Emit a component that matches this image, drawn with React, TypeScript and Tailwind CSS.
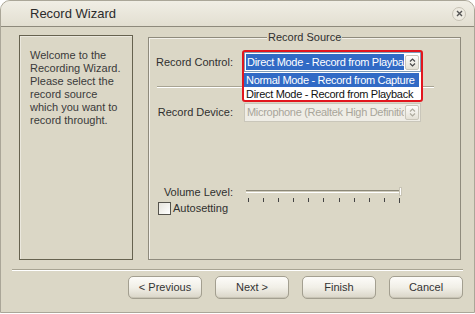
import React from 'react';

const Spin = ({ disabled }: { disabled?: boolean }) => (
  <div className="w-[14px] h-[15px] shrink-0 rounded-[2px] border border-[#c9c6ba] bg-linear-to-b from-[#fdfdfb] to-[#e4e1d6] flex items-center justify-center">
    <svg width="7" height="9" viewBox="0 0 7 9">
      <path
        d="M1 3.5L3.5 1L6 3.5M1 5.5L3.5 8L6 5.5"
        fill="none"
        stroke={disabled ? '#aeab9f' : '#4a4a4a'}
        strokeWidth="1.2"
      />
    </svg>
  </div>
);

const Btn = ({ label }: { label: string }) => (
  <button className="w-[74px] h-[23px] rounded-[5px] border border-[#a39f90] bg-linear-to-b from-[#fdfcf9] via-[#f1efe7] to-[#d9d5c7] text-[11px] text-[#333] shadow-[inset_0_-1px_0_#c8c4b5]">
    {label}
  </button>
);

const ticks = [0, 1, 2, 3, 4, 5, 6, 7, 8, 9, 10];

export default function App() {
  return (
    <div className="w-[475px] h-[314px] bg-white font-['Liberation_Sans',Arial,sans-serif] text-[11px] text-[#2f2f2f]">
      <div className="w-[475px] h-[313px] rounded-t-[10px] border border-[#aaa698] bg-[#dbd7c6] flex flex-col overflow-hidden">
        {/* Title bar */}
        <div className="h-[26px] shrink-0 flex items-center justify-between pl-[29px] pr-[8px] bg-linear-to-b from-[#f0eee5] to-[#e3dfd1] border-b border-[#8e8a7c]">
          <span className="text-[13px] text-[#2b2b2b]">Record Wizard</span>
          <div className="w-[14px] h-[14px] rounded-full border border-[#c6c2b4] bg-[#eeebe1] flex items-center justify-center">
            <svg width="7" height="7" viewBox="0 0 7 7">
              <path d="M1 1L6 6M6 1L1 6" stroke="#555" strokeWidth="1.4" />
            </svg>
          </div>
        </div>

        {/* Body */}
        <div className="flex pl-[18px] pt-[8px] h-[232px] shrink-0">
          <div className="w-[114px] h-[225px] border border-[#66624f] shadow-[inset_1px_1px_0_#ebe8de] pl-[10px] pt-[13px] leading-[13px] text-[#3a3a3a]">
            Welcome to the
            <br />
            Recording Wizard.
            <br />
            Please select the
            <br />
            record source
            <br />
            which you want to
            <br />
            record throught.
          </div>

          <div className="relative ml-[15px] mt-[2px] w-[313px] h-[223px] border border-[#8f8b7d] shadow-[inset_1px_1px_0_#f3f1ea]">
            <span className="absolute left-[118px] -top-[7px] px-[1px] bg-[#dbd7c6] leading-[13px]">Record Source</span>

            {/* Record Control */}
            <div className="flex items-center mt-[14px]">
              <div className="w-[84px] text-right">Record Control:</div>
              <div className="relative ml-[11px] w-[177px] h-[20px] tracking-[-0.3px]">
                <div className="h-full border border-[#7f9db9] bg-white flex items-center p-[1px] gap-[1px]">
                  <div className="flex-1 h-[16px] bg-[#316ac5] text-white leading-[16px] px-[1px] overflow-hidden whitespace-nowrap">
                    Direct Mode - Record from Playback
                  </div>
                  <Spin />
                </div>
                <div className="absolute left-0 top-[20px] w-full h-[30px] bg-white pt-[1px] pr-[2px] z-10">
                  <div className="h-[14px] leading-[14px] bg-[#316ac5] text-white px-[2px] whitespace-nowrap overflow-hidden">
                    Normal Mode - Record from Capture
                  </div>
                  <div className="h-[14px] leading-[14px] text-[#111] px-[2px] whitespace-nowrap overflow-hidden">
                    Direct Mode - Record from Playback
                  </div>
                </div>
                <div className="absolute -left-[2px] -top-[2px] w-[181px] h-[52px] border-2 border-[#e2161e] rounded-[3px] z-20" />
              </div>
            </div>

            {/* Separator */}
            <div className="ml-[8px] mt-[14px] w-[277px] h-[2px] border-t border-[#a8a493] border-b border-b-white" />

            {/* Record Device */}
            <div className="flex items-center mt-[15px]">
              <div className="w-[84px] text-right">Record Device:</div>
              <div className="ml-[11px] w-[177px] h-[19px] border border-[#c9c6ba] bg-[#efede6] flex items-center pl-[2px] pr-[1px] gap-[1px] tracking-[-0.3px]">
                <div className="flex-1 text-[#a8a59a] overflow-hidden whitespace-nowrap leading-[15px]">
                  Microphone (Realtek High Definition Audio)
                </div>
                <Spin disabled />
              </div>
            </div>

            {/* Volume */}
            <div className="flex items-start mt-[63px]">
              <div className="w-[84px] text-right leading-[14px]">Volume Level:</div>
              <div className="ml-[13px] w-[156px] pt-[5px]">
                <div className="relative h-[3px] border-t border-[#8c8878] bg-[#cfcbbb] border-b border-b-white">
                  <div className="absolute right-[0px] -top-[4px] w-[3px] h-[9px] bg-white border border-[#c9c5b6]" />
                </div>
                <div className="flex justify-between mt-[5px] px-[2px]">
                  {ticks.map((t) => (
                    <div key={t} className={t === 10 ? 'w-[1px] h-[5px] bg-[#444]' : 'w-[1px] h-[4px] bg-[#444]'} />
                  ))}
                </div>
              </div>
            </div>

            {/* Autosetting */}
            <div className="flex items-center ml-[9px] -mt-[1px]">
              <div className="w-[13px] h-[13px] border border-[#55534c] bg-linear-to-br from-[#e6e4dc] to-white" />
              <span className="ml-[2px] leading-[13px]">Autosetting</span>
            </div>
          </div>
        </div>

        {/* Bottom separator */}
        <div className="mx-[11px] mt-[10px] h-[2px] border-t border-[#a8a493] border-b border-b-white" />

        {/* Buttons */}
        <div className="flex justify-end gap-[13px] pr-[11px] mt-[5px]">
          <Btn label="< Previous" />
          <Btn label="Next >" />
          <Btn label="Finish" />
          <Btn label="Cancel" />
        </div>
      </div>
    </div>
  );
}
